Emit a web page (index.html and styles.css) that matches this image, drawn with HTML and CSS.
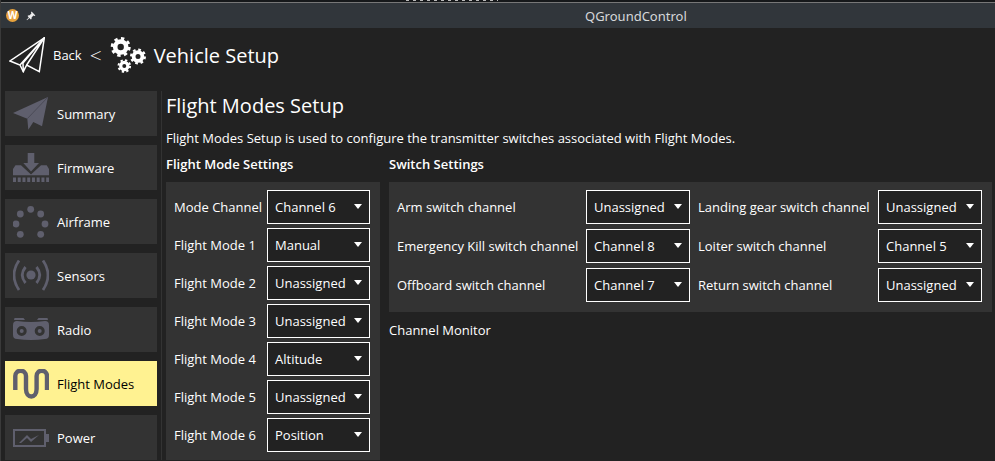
FILE: index.html
```html
<!DOCTYPE html>
<html lang="en">
<head>
    <meta charset="UTF-8">
    <meta name="viewport" content="width=device-width, initial-scale=1.0">
    <title>QGroundControl</title>
    <link rel="stylesheet" href="styles.css">
</head>
<body>

    <div class="topstrip"><div class="topstrip-bits"></div></div>

    <div class="titlebar">
        <div class="titlebar-left">
            <span class="app-badge">W</span>
            <svg class="pin" width="10" height="10" viewBox="0 0 10 10"><path d="M5.6 0.6 L9.4 4.4 L8.4 5 L7.4 4.6 L5.6 6.4 L5.6 8 L4.8 8.4 L3.4 7 L1 9.2 L0.6 8.8 L2.8 6.4 L1.6 5 L2 4.4 L3.6 4.2 L5.4 2.6 L5 1.4 Z" fill="#eee"/></svg>
        </div>
        <div class="titlebar-name">QGroundControl</div>
    </div>

    <div class="toolbar">
        <svg class="plane-icon" width="36" height="36" viewBox="0 0 36 36" fill="none" stroke="#fff" stroke-width="1.5" stroke-linejoin="miter">
            <path d="M35.3 0.8 L1 24 L11 28 L14.3 34.7 L17.7 28 L30.3 34.7 Z"/>
            <path d="M11 28 L35.3 0.8 L17.7 28 M14.3 34.7 L14 26 L35.3 0.8"/>
        </svg>
        <span class="back-label">Back</span>
        <span class="back-arrow">&lt;</span>
        <svg class="gears-icon" width="36" height="36" viewBox="0 0 36 36" fill="none" stroke="#fff">
            <circle cx="10.7" cy="10" r="5.5" stroke-width="4.6"/>
            <circle cx="10.7" cy="10" r="8.6" stroke-width="2.8" stroke-dasharray="3.37 3.38"/>
            <circle cx="28" cy="19.5" r="4.4" stroke-width="3.8"/>
            <circle cx="28" cy="19.5" r="6.9" stroke-width="2.2" stroke-dasharray="2.71 2.71"/>
            <circle cx="14.3" cy="29" r="3.6" stroke-width="3.2"/>
            <circle cx="14.3" cy="29" r="5.8" stroke-width="2" stroke-dasharray="2.28 2.28"/>
        </svg>
        <span class="toolbar-title">Vehicle Setup</span>
    </div>

    <div class="main">
        <nav class="sidebar">
            <div class="nav-btn">
                <svg class="nav-icon" width="36" height="33" viewBox="0 0 36 33">
                    <path d="M35 0 L0 16 L14.3 21.7 L15.3 32.7 L20.3 25 L29 29.3 Z"/>
                    <path fill="none" stroke="#4b4b57" stroke-width="1" d="M14.3 21.7 L35 0"/>
                </svg>
                <span>Summary</span>
            </div>
            <div class="nav-btn">
                <svg class="nav-icon" width="36" height="29" viewBox="0 0 36 29">
                    <path d="M14.7 0 H21.3 V10 H26 L18 18.5 L10.3 10 H14.7 Z"/>
                    <path d="M2.5 12.3 H8 L18 21.5 L28 12.3 H33.7 L36 16 V22.3 H0 V16 Z"/>
                    <path fill="none" stroke="#5f5f6d" stroke-width="4.5" stroke-dasharray="3 1.74" d="M0 26.7 H36"/>
                </svg>
                <span>Firmware</span>
            </div>
            <div class="nav-btn">
                <svg class="nav-icon" width="36" height="35" viewBox="0 0 36 35">
                    <circle cx="17.7" cy="5.3" r="3.4"/>
                    <circle cx="7.3" cy="10" r="3.4"/>
                    <circle cx="27.7" cy="10" r="3.4"/>
                    <circle cx="3" cy="20" r="3.4"/>
                    <circle cx="32" cy="20" r="3.4"/>
                    <circle cx="7.3" cy="30.3" r="3.4"/>
                    <circle cx="27.7" cy="30.3" r="3.4"/>
                </svg>
                <span>Airframe</span>
            </div>
            <div class="nav-btn">
                <svg class="nav-icon" width="36" height="32" viewBox="0 0 36 32">
                    <circle cx="18" cy="15" r="4.6"/>
                    <g fill="none" stroke="#5f5f6d" stroke-width="2.8">
                        <path d="M12.5 7 Q6 15 12.5 23 M23.5 7 Q30 15 23.5 23"/>
                        <path d="M6 0.5 Q-4 15 6 30 M30 0.5 Q40 15 30 30"/>
                    </g>
                </svg>
                <span>Sensors</span>
            </div>
            <div class="nav-btn">
                <svg class="nav-icon" width="36" height="23" viewBox="0 0 36 23">
                    <path d="M1.5 0 H10.5 L12 2 H1 Z M25.5 0 H34.5 L35 2 H24 Z"/>
                    <path fill-rule="evenodd" d="M4 3 Q18 5 32 3 Q36 3 36 7 V17 Q36 21 32 21 Q18 23 4 21 Q0 21 0 17 V7 Q0 3 4 3 Z M8.7 8 A5 5 0 1 0 8.7 18 A5 5 0 1 0 8.7 8 Z M26.7 8 A5 5 0 1 0 26.7 18 A5 5 0 1 0 26.7 8 Z"/>
                    <circle cx="8.7" cy="13" r="2"/>
                    <circle cx="26.7" cy="13" r="2"/>
                </svg>
                <span>Radio</span>
            </div>
            <div class="nav-btn nav-btn-active">
                <svg class="nav-icon" width="36" height="30" viewBox="0 0 36 30">
                    <path fill="none" stroke="#5f5f6d" stroke-width="4.4" d="M2.3 21 V7 C2.3 0 13 0 13 7 V20 C13 30 23.6 30 23.6 20 V7 C23.6 0 34 0 34 7 V21"/>
                </svg>
                <span>Flight Modes</span>
            </div>
            <div class="nav-btn">
                <svg class="nav-icon" width="36" height="18" viewBox="0 0 36 18">
                    <path fill-rule="evenodd" d="M0 0 H33 V5 H36 V13 H33 V18 H0 Z M2 2 V16 H31 V2 Z"/>
                    <path d="M6 14 L14 6 L18 10 L26 6 L18 13 L14 9 L8 14 Z"/>
                </svg>
                <span>Power</span>
            </div>
        </nav>

        <div class="content">
            <h1>Flight Modes Setup</h1>
            <p class="desc">Flight Modes Setup is used to configure the transmitter switches associated with Flight Modes.</p>

            <div class="columns">
                <section class="mode-col">
                    <h2>Flight Mode Settings</h2>
                    <div class="panel mode-panel">
                        <label>Mode Channel</label><div class="combo">Channel 6</div>
                        <label>Flight Mode 1</label><div class="combo">Manual</div>
                        <label>Flight Mode 2</label><div class="combo">Unassigned</div>
                        <label>Flight Mode 3</label><div class="combo">Unassigned</div>
                        <label>Flight Mode 4</label><div class="combo">Altitude</div>
                        <label>Flight Mode 5</label><div class="combo">Unassigned</div>
                        <label>Flight Mode 6</label><div class="combo">Position</div>
                    </div>
                </section>

                <section class="switch-col">
                    <h2>Switch Settings</h2>
                    <div class="panel switch-panel">
                        <label>Arm switch channel</label><div class="combo">Unassigned</div>
                        <label>Landing gear switch channel</label><div class="combo">Unassigned</div>
                        <label>Emergency Kill switch channel</label><div class="combo">Channel 8</div>
                        <label>Loiter switch channel</label><div class="combo">Channel 5</div>
                        <label>Offboard switch channel</label><div class="combo">Channel 7</div>
                        <label>Return switch channel</label><div class="combo">Unassigned</div>
                    </div>
                    <div class="monitor">Channel Monitor</div>
                </section>
            </div>
        </div>
    </div>

</body>
</html>
```

FILE: styles.css
```css
html, body {
    margin: 0;
    height: 461px;
    overflow: hidden;
}
body {
    font-family: "Open Sans", sans-serif;
    font-size: 13px;
    color: #fff;
    background-color: #222;
    border-left: 1px solid #3a3a3a;
}
.topstrip {
    height: 2px;
    background-color: #16181a;
}
.topstrip-bits {
    width: 92px;
    height: 1px;
    margin-left: 405px;
    background: repeating-linear-gradient(90deg, #bbb 0 3px, transparent 3px 7px);
}
.titlebar {
    height: 25px;
    display: flex;
    align-items: center;
    background-color: #31363b;
    border-top: 1px solid #777;
}
.titlebar-left {
    width: 579px;
    display: flex;
    align-items: center;
    gap: 7px;
    padding-left: 5px;
}
.app-badge {
    width: 13px;
    height: 13px;
    border-radius: 50%;
    background-color: #e8a33d;
    color: #fff;
    font-size: 10px;
    font-weight: 700;
    line-height: 13px;
    text-align: center;
}
.titlebar-name {
    font-family: "Noto Sans", sans-serif;
    font-size: 13px;
    color: #d6d8da;
}
.toolbar {
    height: 54px;
    display: flex;
    align-items: center;
    padding-left: 8px;
}
.plane-icon {
    margin-right: 8px;
}
.back-arrow {
    margin-left: 8px;
    font-size: 21px;
    font-weight: 300;
}
.gears-icon {
    margin-left: 8px;
}
.toolbar-title {
    margin-left: 8px;
    font-size: 20px;
}
.main {
    display: flex;
    margin-top: 9px;
}
.sidebar {
    width: 152px;
    margin-left: 4px;
    display: flex;
    flex-direction: column;
    gap: 9px;
    padding-right: 4px;
    border-right: 1px solid #333;
}
.nav-btn {
    height: 45px;
    flex: none;
    display: flex;
    align-items: center;
    background-color: #333;
}
.nav-btn-active {
    background-color: #fff291;
    color: #000;
}
.nav-icon {
    flex: none;
    margin-left: 8px;
    margin-right: 8px;
    fill: #5f5f6d;
}
.content {
    margin-left: 4px;
    flex: 1;
    min-width: 0;
}
h1 {
    margin: 0;
    font-size: 20px;
    font-weight: 400;
    line-height: 30px;
}
.desc {
    margin: 8px 0 0;
    line-height: 18px;
}
h2 {
    margin: 0;
    font-size: 13px;
    font-weight: 600;
    line-height: 18px;
}
.columns {
    display: flex;
    gap: 9px;
    margin-top: 8px;
}
.panel {
    margin-top: 9px;
    background-color: #333;
    padding: 8px;
    display: grid;
    align-items: center;
}
.mode-col {
    width: 214px;
}
.mode-panel {
    grid-template-columns: 93px 103px;
    row-gap: 4px;
}
.switch-col {
    width: 603px;
}
.switch-panel {
    grid-template-columns: 189px 104px 188px 104px;
    column-gap: 0;
    row-gap: 5px;
    padding-bottom: 10px;
}
.switch-panel label:nth-child(4n+3) {
    padding-left: 8px;
}
.combo {
    height: 34px;
    box-sizing: border-box;
    border: 1px solid #fff;
    background-color: #222;
    display: flex;
    align-items: center;
    padding-left: 7px;
    position: relative;
}
.combo::after {
    content: "";
    position: absolute;
    right: 7px;
    top: 13px;
    border-left: 4.5px solid transparent;
    border-right: 4.5px solid transparent;
    border-top: 5px solid #fff;
}
.monitor {
    margin-top: 9px;
    line-height: 18px;
}
```
